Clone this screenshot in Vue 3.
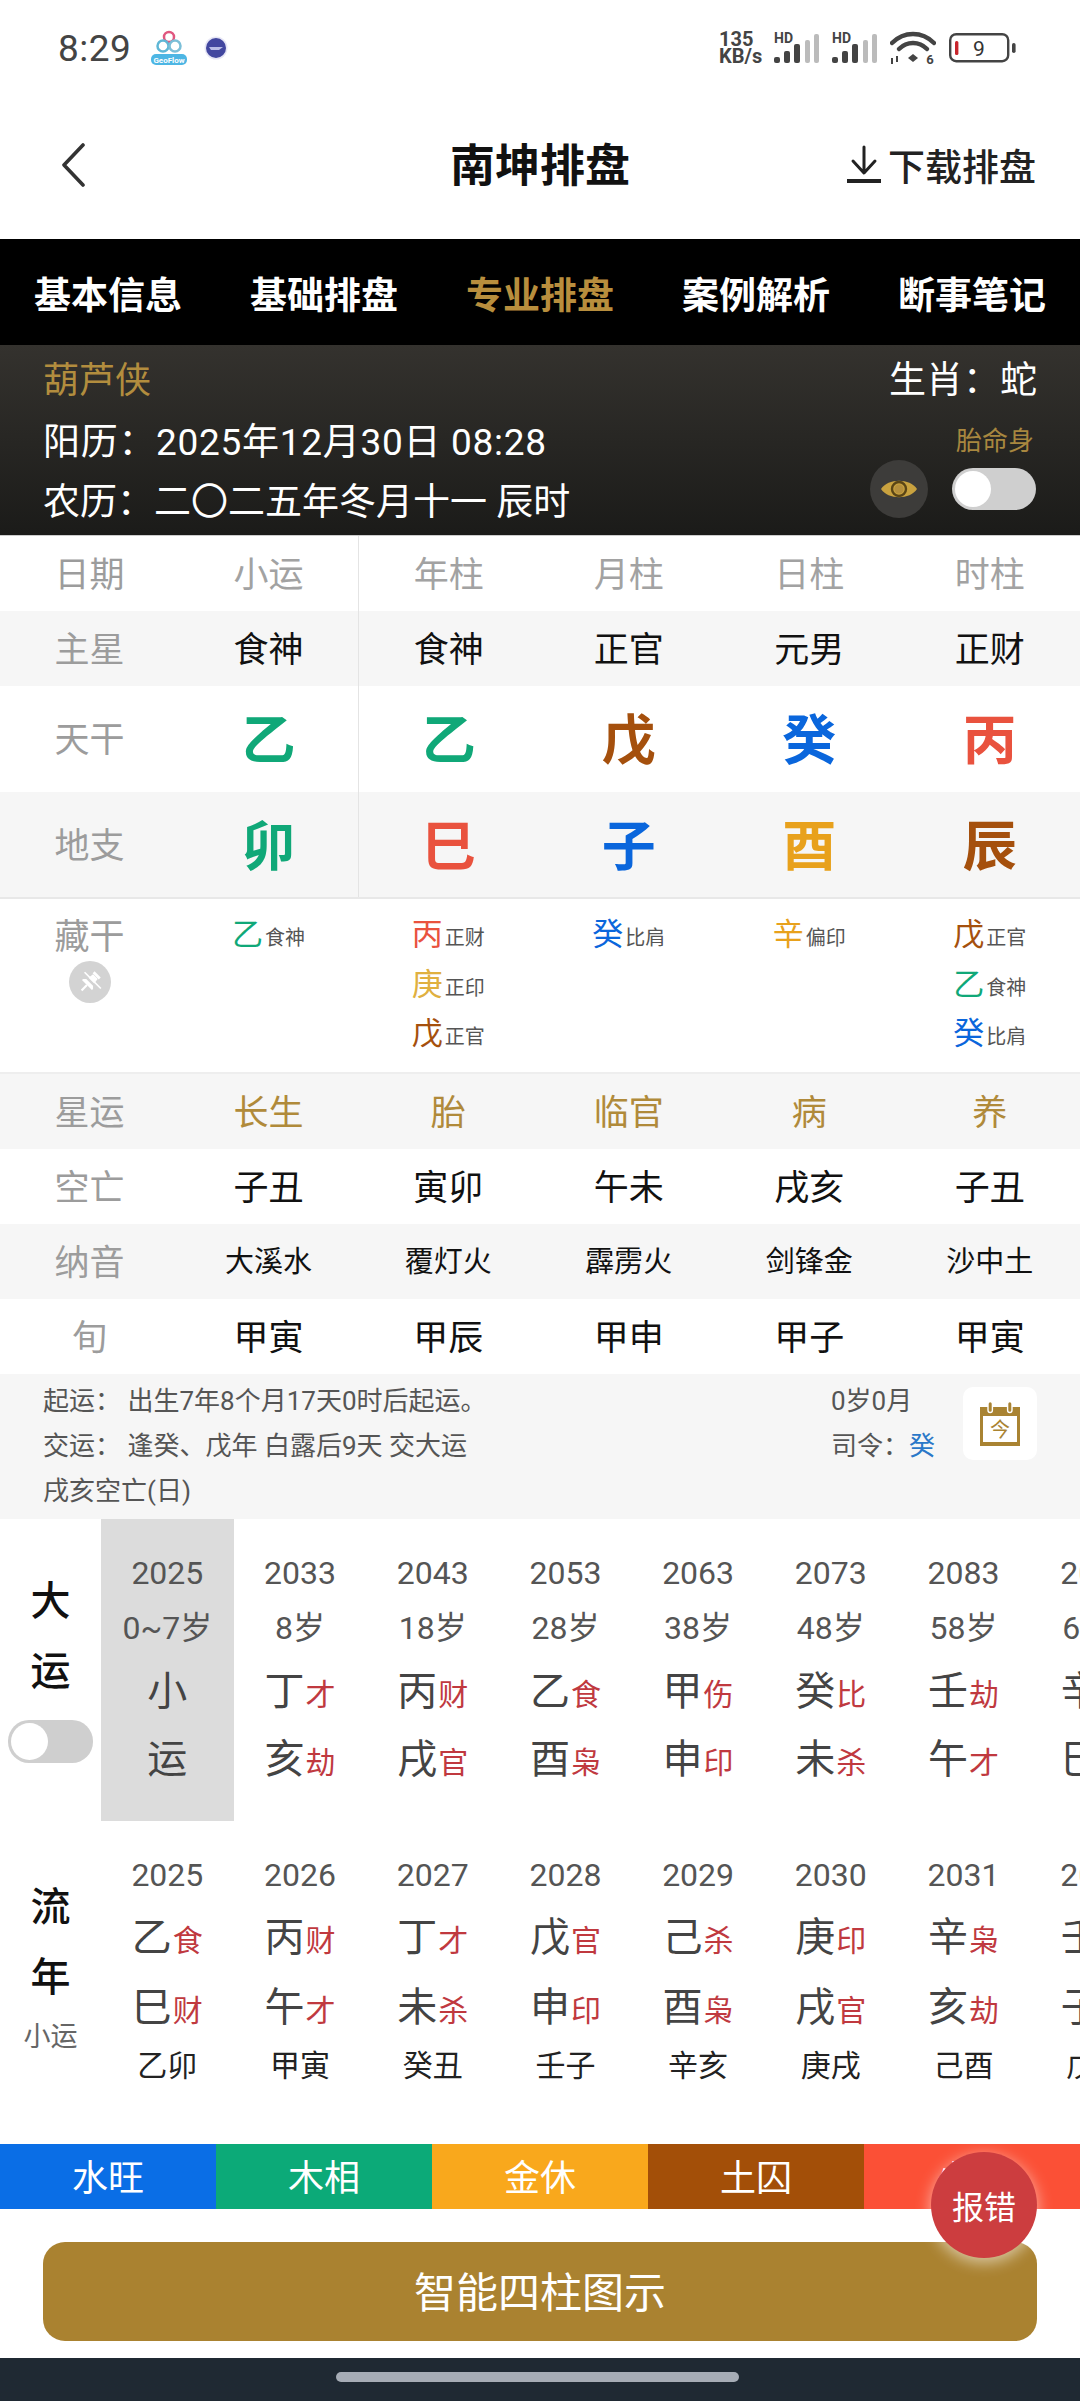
<script setup>
const tabs = ['基本信息', '基础排盘', '专业排盘', '案例解析', '断事笔记']
const C = { 乙: 'g', 卯: 'g', 戊: 'b', 辰: 'b', 癸: 'u', 子: 'u', 丙: 'r', 巳: 'r', 酉: 'o', 辛: 'o', 庚: 'y' }
const head = ['小运', '年柱', '月柱', '日柱', '时柱']
const zhu = ['食神', '食神', '正官', '元男', '正财']
const gan = ['乙', '乙', '戊', '癸', '丙']
const zhi = ['卯', '巳', '子', '酉', '辰']
const hidden = [
  [['乙', '食神']],
  [['丙', '正财'], ['庚', '正印'], ['戊', '正官']],
  [['癸', '比肩']],
  [['辛', '偏印']],
  [['戊', '正官'], ['乙', '食神'], ['癸', '比肩']]
]
const lower = [
  { label: '星运', vals: ['长生', '胎', '临官', '病', '养'], cls: 'gold', bg: true },
  { label: '空亡', vals: ['子丑', '寅卯', '午未', '戌亥', '子丑'], cls: 'ink' },
  { label: '纳音', vals: ['大溪水', '覆灯火', '霹雳火', '剑锋金', '沙中土'], cls: 'ink small', bg: true },
  { label: '旬', vals: ['甲寅', '甲辰', '甲申', '甲子', '甲寅'], cls: 'ink' }
]
const dayun = [
  ['2033', '8岁', '丁', '才', '亥', '劫'],
  ['2043', '18岁', '丙', '财', '戌', '官'],
  ['2053', '28岁', '乙', '食', '酉', '枭'],
  ['2063', '38岁', '甲', '伤', '申', '印'],
  ['2073', '48岁', '癸', '比', '未', '杀'],
  ['2083', '58岁', '壬', '劫', '午', '才'],
  ['2093', '68岁', '辛', '枭', '巳', '财']
]
const liunian = [
  ['2025', '乙', '食', '巳', '财', '乙卯'],
  ['2026', '丙', '财', '午', '才', '甲寅'],
  ['2027', '丁', '才', '未', '杀', '癸丑'],
  ['2028', '戊', '官', '申', '印', '壬子'],
  ['2029', '己', '杀', '酉', '枭', '辛亥'],
  ['2030', '庚', '印', '戌', '官', '庚戌'],
  ['2031', '辛', '枭', '亥', '劫', '己酉'],
  ['2032', '壬', '劫', '子', '比', '戊申']
]
const wuxing = [
  ['水旺', '#0a6ee6'],
  ['木相', '#0caa78'],
  ['金休', '#f9a81c'],
  ['土囚', '#a34f08'],
  ['火死', '#fb5036']
]
</script>

<template>
  <div class="page">
    <div class="status">
      <span class="time">8:29</span>
      <svg class="logo" width="38" height="36" viewBox="0 0 38 36">
        <circle cx="19" cy="7" r="5" fill="none" stroke="#e0577f" stroke-width="2.5" />
        <circle cx="13" cy="16" r="5.5" fill="none" stroke="#5fb7d6" stroke-width="2.5" />
        <circle cx="25" cy="16" r="5.5" fill="none" stroke="#7bbfd8" stroke-width="2.5" />
        <rect x="1" y="24" width="36" height="11" rx="5" fill="#4db6e4" />
        <text x="19" y="32.5" font-size="8" font-weight="700" fill="#fff" text-anchor="middle" font-family="Roboto">GeoFlow</text>
      </svg>
      <svg class="dot" width="24" height="24" viewBox="0 0 24 24">
        <circle cx="12" cy="12" r="11.5" fill="#e6e6f5" />
        <circle cx="12" cy="12" r="10" fill="#42479f" />
        <path d="M5 11 H19 L15 14 H7 Z" fill="#b9bde6" />
      </svg>
      <div class="sys">
        <div class="speed"><span>135</span><span>KB/s</span></div>
        <div v-for="n in 2" :key="n" class="sig">
          <span class="hd">HD</span>
          <svg width="46" height="31" viewBox="0 0 46 31">
            <rect x="0" y="24" width="6" height="6" rx="2" fill="#444" />
            <rect x="10" y="18" width="6" height="12" rx="2" fill="#444" />
            <rect x="20" y="11" width="6" height="19" rx="2" fill="#444" />
            <rect x="31" y="7" width="5" height="23" rx="2" fill="#bbb" />
            <rect x="40" y="1" width="5" height="29" rx="2" fill="#bbb" />
          </svg>
        </div>
        <svg class="wifi" width="46" height="34" viewBox="0 0 46 34">
          <path d="M2 12 C14 0 32 0 44 12" fill="none" stroke="#444" stroke-width="4.5" stroke-linecap="round" />
          <path d="M9 18 C17 10 29 10 37 18" fill="none" stroke="#444" stroke-width="4.5" stroke-linecap="round" />
          <path d="M18 27 L23 23 L28 27 L23 31 Z" fill="#444" />
          <path d="M2 27 V33 M7 25 V31" stroke="#444" stroke-width="2" />
          <text x="40" y="33" font-size="13" font-weight="700" fill="#444" text-anchor="middle" font-family="Roboto">6</text>
        </svg>
        <svg class="batt" width="67" height="30" viewBox="0 0 67 30">
          <rect x="1.2" y="1.2" width="58" height="27" rx="6" fill="#fff" stroke="#444" stroke-width="2.4" />
          <rect x="6" y="8" width="3.4" height="14" rx="1.5" fill="#c8252c" />
          <rect x="63" y="10" width="3.6" height="10" rx="1.8" fill="#444" />
          <text x="30" y="23" font-size="21" fill="#333" text-anchor="middle" font-family="Roboto">9</text>
        </svg>
      </div>
    </div>

    <div class="nav">
      <svg class="back" width="26" height="44" viewBox="0 0 26 44">
        <path d="M23 2 L4 22 L23 42" fill="none" stroke="#333" stroke-width="3.6" stroke-linecap="round" stroke-linejoin="round" />
      </svg>
      <div class="title">南坤排盘</div>
      <div class="dl">
        <svg width="36" height="40" viewBox="0 0 36 40">
          <path d="M18 2 V27 M7 16 L18 28 L29 16" fill="none" stroke="#222" stroke-width="3" stroke-linecap="round" stroke-linejoin="round" />
          <rect x="1" y="34" width="34" height="4" fill="#222" />
        </svg>
        <span>下载排盘</span>
      </div>
    </div>

    <div class="tabs">
      <div v-for="(t, i) in tabs" :key="t" class="tab" :class="{ active: i === 2 }">{{ t }}</div>
    </div>

    <div class="panel">
      <div class="panel-left">
        <div class="name">葫芦侠</div>
        <div class="line date">阳历：2025年12月30日 08:28</div>
        <div class="line">农历：二〇二五年冬月十一 辰时</div>
      </div>
      <div class="panel-right">
        <div class="zodiac">生肖：蛇</div>
        <div class="tai">胎命身</div>
        <div class="ctrls">
          <div class="eye">
            <svg width="38" height="28" viewBox="0 0 38 28">
              <path d="M1 14 C8 3 30 3 37 14 C30 25 8 25 1 14 Z" fill="#c9a23f" />
              <circle cx="19" cy="14" r="7" fill="none" stroke="#5a4516" stroke-width="2.4" />
              <circle cx="19" cy="14" r="4.6" fill="#b58f3d" />
            </svg>
          </div>
          <div class="toggle"><i></i></div>
        </div>
      </div>
    </div>

    <div class="grid row h75">
      <div class="lab">日期</div>
      <div v-for="(v, i) in head" :key="i" class="cell muted" :class="{ split: i === 1 }">{{ v }}</div>
    </div>
    <div class="grid row h75 bg">
      <div class="lab">主星</div>
      <div v-for="(v, i) in zhu" :key="i" class="cell ink" :class="{ split: i === 1 }">{{ v }}</div>
    </div>
    <div class="grid row h106">
      <div class="lab">天干</div>
      <div v-for="(v, i) in gan" :key="i" class="cell big" :class="[C[v], { split: i === 1 }]">{{ v }}</div>
    </div>
    <div class="grid row h107 bg ruled">
      <div class="lab">地支</div>
      <div v-for="(v, i) in zhi" :key="i" class="cell big" :class="[C[v], { split: i === 1 }]">{{ v }}</div>
    </div>

    <div class="grid hidden-row">
      <div class="hid-lab">
        <div class="lab tall">藏干</div>
        <div class="pin">
          <svg width="26" height="26" viewBox="0 0 24 24">
            <g transform="rotate(45 12 12)" fill="#fff">
              <rect x="8" y="2" width="8" height="2.6" />
              <path d="M9 5 H15 L16 12 L18.5 14.5 V16 H5.5 V14.5 L8 12 Z" />
              <rect x="11" y="16" width="2" height="7" />
            </g>
            <path d="M5 4 L20 19" stroke="#d3d3d3" stroke-width="2.4" />
            <path d="M7 3 L22 18" stroke="#fff" stroke-width="1.6" />
          </svg>
        </div>
      </div>
      <div v-for="(list, i) in hidden" :key="i" class="hid-col">
        <div v-for="(h, j) in list" :key="j" class="hid-item">
          <span class="hid-stem" :class="C[h[0]]">{{ h[0] }}</span><span class="hid-tag">{{ h[1] }}</span>
        </div>
      </div>
    </div>

    <div v-for="r in lower" :key="r.label" class="grid row h75" :class="{ bg: r.bg }">
      <div class="lab">{{ r.label }}</div>
      <div v-for="(v, i) in r.vals" :key="i" class="cell" :class="r.cls">{{ v }}</div>
    </div>

    <div class="info">
      <div class="info-left">
        <div>起运： 出生7年8个月17天0时后起运。</div>
        <div>交运： 逢癸、戊年 白露后9天 交大运</div>
        <div>戌亥空亡(日)</div>
      </div>
      <div class="info-right">
        <div>0岁0月</div>
        <div>司令：<span class="siling">癸</span></div>
      </div>
      <div class="cal">
        <svg width="42" height="46" viewBox="0 0 42 46">
          <path d="M1 6 H41 V45 H1 Z" fill="#a98332" />
          <rect x="4" y="15" width="34" height="26" fill="#fff" />
          <rect x="9" y="0.5" width="4.4" height="11" rx="2.2" fill="#a98332" stroke="#fff" stroke-width="1.4" />
          <rect x="28.6" y="0.5" width="4.4" height="11" rx="2.2" fill="#a98332" stroke="#fff" stroke-width="1.4" />
          <text x="21" y="36" font-size="20" fill="#a98332" text-anchor="middle" font-family="Noto Sans CJK SC">今</text>
        </svg>
      </div>
    </div>

    <div class="luck dy">
      <div class="side">
        <div class="side-ch">大</div>
        <div class="side-ch">运</div>
        <div class="toggle small"><i></i></div>
      </div>
      <div class="cols">
        <div class="col first">
          <div class="yr">2025</div>
          <div class="age">0~7岁</div>
          <div class="gz r1"><span class="st">小</span></div>
          <div class="gz r2"><span class="st">运</span></div>
        </div>
        <div v-for="d in dayun" :key="d[0]" class="col">
          <div class="yr">{{ d[0] }}</div>
          <div class="age">{{ d[1] }}</div>
          <div class="gz r1"><span class="st">{{ d[2] }}</span><span class="tg">{{ d[3] }}</span></div>
          <div class="gz r2"><span class="st">{{ d[4] }}</span><span class="tg">{{ d[5] }}</span></div>
        </div>
      </div>
    </div>

    <div class="luck ln">
      <div class="side">
        <div class="side-ch">流</div>
        <div class="side-ch">年</div>
        <div class="side-sub">小运</div>
      </div>
      <div class="cols">
        <div v-for="d in liunian" :key="d[0]" class="col">
          <div class="yr">{{ d[0] }}</div>
          <div class="gz r3"><span class="st">{{ d[1] }}</span><span class="tg">{{ d[2] }}</span></div>
          <div class="gz r3"><span class="st">{{ d[3] }}</span><span class="tg">{{ d[4] }}</span></div>
          <div class="sub">{{ d[5] }}</div>
        </div>
      </div>
    </div>

    <div class="wx">
      <div v-for="w in wuxing" :key="w[0]" class="wx-item" :style="{ background: w[1] }">{{ w[0] }}</div>
    </div>
    <div class="btn-wrap">
      <div class="btn">智能四柱图示</div>
    </div>
    <div class="home"><i></i></div>
    <div class="report">报错</div>
  </div>
</template>

<style>
html, body { margin: 0; padding: 0; background: #fff; }
</style>

<style scoped>
.page {
  position: relative;
  width: 1080px;
  height: 2401px;
  overflow: hidden;
  background: #fff;
  font-family: Roboto, "Noto Sans CJK SC", sans-serif;
  color: #222;
}
.status { height: 96px; display: flex; align-items: center; padding: 0 0 0 58px; box-sizing: border-box; color: #444; }
.time { font-size: 37px; width: 92px; letter-spacing: 0.5px; }
.logo { margin-right: 16px; }
.sys { margin-left: auto; display: flex; align-items: center; padding-right: 64px; }
.speed { width: 48px; display: flex; flex-direction: column; font-size: 20px; line-height: 17px; font-weight: 700; margin-right: 7px; color: #444; }
.sig { position: relative; width: 46px; height: 31px; margin-right: 12px; margin-top: 1px; }
.hd { position: absolute; left: 0; top: -2px; font-size: 14px; line-height: 14px; font-weight: 700; color: #444; }
.wifi { margin: 0 13px 0 0; }

.nav { height: 143px; display: grid; grid-template-columns: 1fr auto 1fr; align-items: center; padding: 0 44px; box-sizing: border-box; }
.back { display: block; margin: -6px 0 0 16px; }
.title { font-size: 45px; font-weight: 700; color: #111; margin-top: -10px; }
.dl { justify-self: end; display: flex; align-items: center; font-size: 37px; font-weight: 500; color: #222; gap: 6px; margin-top: -6px; }

.tabs { height: 106px; background: #000; display: grid; grid-template-columns: repeat(5, 1fr); align-items: center; }
.tab { text-align: center; color: #fff; font-size: 37px; font-weight: 700; padding-top: 1px; }
.tab.active { color: #b88e3d; }

.panel { height: 191px; box-sizing: border-box; background: linear-gradient(180deg, #34322e 0%, #1b1b19 100%); display: flex; justify-content: space-between; padding: 0 43px; border-bottom: 1px solid #ccc; }
.panel-left { color: #fff; }
.name { color: #b28d3e; font-size: 36px; line-height: 36px; margin-top: 18px; }
.line { font-size: 37px; line-height: 60px; }
.date { margin-top: 14px; letter-spacing: 0.7px; }
.panel-right { display: flex; flex-direction: column; align-items: flex-end; }
.zodiac { color: #fff; font-size: 37px; line-height: 36px; margin-top: 18px; }
.tai { color: #a8873f; font-size: 26px; line-height: 30px; margin-top: 27px; margin-right: 3px; }
.ctrls { display: flex; align-items: center; gap: 24px; margin-top: 4px; margin-right: 1px; }
.eye { width: 58px; height: 58px; border-radius: 50%; background: #3d3c3a; display: flex; align-items: center; justify-content: center; }
.toggle { width: 84px; height: 42px; border-radius: 21px; background: #cfcfcf; position: relative; }
.toggle i { position: absolute; left: 3px; top: 3px; width: 36px; height: 36px; border-radius: 50%; background: #fff; }

.grid { display: grid; grid-template-columns: 179px 179px repeat(4, 1fr); }
.row { align-items: stretch; }
.h75 { height: 75px; }
.h106 { height: 106px; }
.h107 { height: 107px; }
.bg { background: #f6f6f6; }
.ruled { border-bottom: 2px solid #e8e8e8; box-sizing: border-box; }
.lab, .cell { display: flex; align-items: center; justify-content: center; padding-bottom: 5px; box-sizing: border-box; }
.lab { color: #9c9c9c; font-size: 35px; }
.cell { font-size: 35px; }
.split { border-left: 1px solid #e4e4e4; }
.muted { color: #a2a2a2; }
.ink { color: #111; }
.small { font-size: 29px; }
.gold { color: #b08a3a; }
.big { font-size: 54px; font-weight: 700; }
.g { color: #10a878; }
.b { color: #a5500d; }
.u { color: #0a66dc; }
.r { color: #e9523e; }
.o { color: #e8a11c; }
.y { color: #e0b040; }

.hidden-row { height: 175px; border-bottom: 2px solid #eee; box-sizing: border-box; }
.hid-lab { display: flex; flex-direction: column; align-items: center; }
.tall { height: 74px; }
.pin { width: 42px; height: 42px; border-radius: 50%; background: #d3d3d3; display: flex; align-items: center; justify-content: center; margin-top: -12px; }
.hid-col { padding-top: 11px; display: flex; flex-direction: column; align-items: center; }
.hid-item { height: 49.5px; display: flex; align-items: baseline; justify-content: center; line-height: 49.5px; }
.hid-stem { font-size: 31px; }
.hid-tag { font-size: 20px; color: #555; margin-left: 2px; }

.info { height: 145px; background: #f6f6f6; display: flex; box-sizing: border-box; padding: 5px 43px 0; color: #555; font-size: 26px; line-height: 45px; }
.info-left { width: 788px; }
.info-right { width: 132px; }
.siling { color: #2a78c8; }
.cal { width: 74px; height: 73px; margin-top: 8px; background: #fff; border-radius: 10px; display: flex; align-items: center; justify-content: center; }

.luck { display: flex; overflow: hidden; }
.dy { height: 302px; }
.ln { height: 323px; }
.side { width: 101px; flex: none; display: flex; flex-direction: column; align-items: center; }
.dy .side { padding-top: 48px; }
.ln .side { padding-top: 52px; }
.side-ch { font-size: 40px; line-height: 70px; font-weight: 500; color: #111; }
.side-sub { font-size: 27px; line-height: 48px; color: #666; }
.toggle.small { width: 85px; height: 43px; margin-top: 13px; }
.toggle.small i { left: 3px; top: 3px; width: 37px; height: 37px; }
.cols { display: flex; }
.col { width: 132.7px; flex: none; box-sizing: border-box; padding-top: 26px; text-align: center; }
.first { background: #dcdcdc; }
.yr { font-size: 32px; line-height: 56px; color: #555; }
.age { font-size: 32px; line-height: 54px; color: #555; }
.gz { display: flex; align-items: baseline; justify-content: center; color: #444; }
.r1 { height: 74px; line-height: 74px; }
.r2 { height: 62px; line-height: 62px; }
.r3 { height: 70px; line-height: 70px; }
.st { font-size: 40px; }
.tg { font-size: 30px; color: #c0393f; margin-left: 1px; }
.sub { font-size: 30px; line-height: 46px; color: #222; }

.wx { height: 65px; display: grid; grid-template-columns: repeat(5, 1fr); }
.wx-item { color: #fff; font-size: 36px; display: flex; align-items: center; justify-content: center; padding-bottom: 4px; box-sizing: border-box; }
.btn-wrap { height: 149px; box-sizing: border-box; padding: 33px 43px 17px; }
.btn { height: 99px; border-radius: 22px; background: #aa8230; color: #fff; font-size: 42px; display: flex; align-items: center; justify-content: center; padding-bottom: 4px; box-sizing: border-box; }
.home { height: 43px; background: #1f2933; display: flex; justify-content: center; padding-top: 14px; box-sizing: border-box; }
.home i { display: block; width: 403px; height: 10px; border-radius: 5px; background: #a6acb6; margin-left: -6px; }
.report { position: absolute; left: 931px; top: 2152px; width: 106px; height: 106px; border-radius: 50%; background: #cc3d3f; color: #fff; font-size: 32px; display: flex; align-items: center; justify-content: center; box-shadow: 0 4px 16px rgba(255, 255, 255, 0.6); }
</style>
